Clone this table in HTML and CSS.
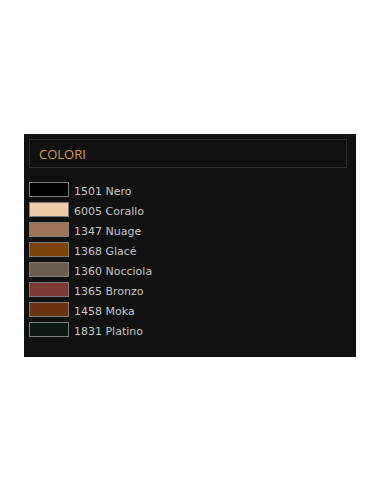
FILE: index.html
```html
<!DOCTYPE html>
<html lang="it">
<head>
<meta charset="utf-8">
<title>Colori</title>
<link rel="stylesheet" href="styles.css">
</head>
<body>
<div class="panel">
  <div class="panel-head">COLORI</div>
  <ul class="colors">
    <li class="color"><span class="swatch" style="background:#000000"></span><span class="label">1501 Nero</span></li>
    <li class="color"><span class="swatch" style="background:#eecba6"></span><span class="label">6005 Corallo</span></li>
    <li class="color"><span class="swatch" style="background:#9e7556"></span><span class="label">1347 Nuage</span></li>
    <li class="color"><span class="swatch" style="background:#7a4408"></span><span class="label">1368 Glacé</span></li>
    <li class="color"><span class="swatch" style="background:#6d5f4f"></span><span class="label">1360 Nocciola</span></li>
    <li class="color"><span class="swatch" style="background:#7c3a33"></span><span class="label">1365 Bronzo</span></li>
    <li class="color"><span class="swatch" style="background:#6b3411"></span><span class="label">1458 Moka</span></li>
    <li class="color"><span class="swatch" style="background:#0c1a13"></span><span class="label">1831 Platino</span></li>
  </ul>
</div>
</body>
</html>
```
FILE: styles.css
```css
html, body {
  margin: 0;
  padding: 0;
  background: #ffffff;
}
.panel {
  box-sizing: border-box;
  width: 332px;
  height: 223px;
  margin: 134px 0 0 24px;
  padding: 5px 9px 0 5px;
  background: #111111;
}
.panel-head {
  box-sizing: border-box;
  height: 29px;
  border: 1px solid #2e2e2e;
  padding: 1px 0 0 9px;
  display: flex;
  align-items: center;
  font-family: "Open Sans", sans-serif;
  font-size: 13px;
  color: #d09c4c;
}
.colors {
  list-style: none;
  margin: 14px 0 0 0;
  padding: 0;
  display: flex;
  flex-direction: column;
  gap: 5px;
}
.color {
  display: flex;
  align-items: center;
  gap: 5px;
  height: 15px;
  font-family: "DejaVu Sans", Verdana, sans-serif;
  font-size: 11px;
  color: #c6c6c6;
}
.label {
  padding-top: 3px;
}
.swatch {
  box-sizing: border-box;
  width: 40px;
  height: 15px;
  border: 1px solid #7c7c7c;
  flex: none;
}
```
